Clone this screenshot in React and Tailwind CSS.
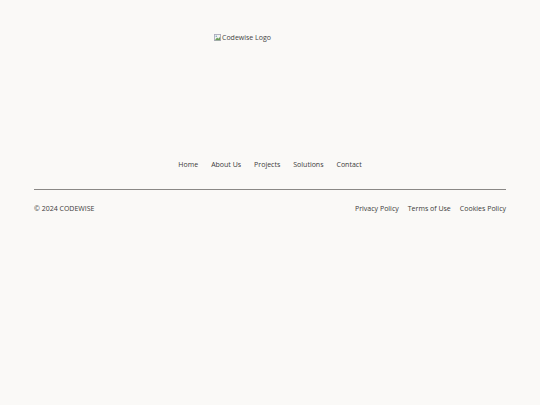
export default function App() {
  const links = ["Home", "About Us", "Projects", "Solutions", "Contact"];
  const legal = ["Privacy Policy", "Terms of Use", "Cookies Policy"];

  return (
    <div className="min-h-screen bg-[#faf9f7] font-['Open_Sans',sans-serif] text-[#3a3a3a]">
      <footer className="px-[34px] pt-[33px]">
        <div className="flex justify-center">
          <div className="h-[127px] w-[112px]">
            <div className="flex items-center gap-[1px] text-[7px] leading-[9px] text-[#444]">
              <svg width="7" height="7" viewBox="0 0 8 8" className="shrink-0">
                <rect x="0.5" y="0.5" width="7" height="7" fill="#f3f3f3" stroke="#aab" strokeWidth="1" />
                <path d="M1 7 L3.5 4 L5 5.5 L7 3 L7 7 Z" fill="#6b9e5a" />
                <circle cx="2.6" cy="2.6" r="0.9" fill="#7ab" />
              </svg>
              <span>Codewise Logo</span>
            </div>
          </div>
        </div>

        <nav className="flex justify-center gap-[13px] text-[7px] leading-[10px]">
          {links.map((link) => (
            <a key={link} href="#">
              {link}
            </a>
          ))}
        </nav>

        <div className="mt-[19px] border-t border-[#8a8886]" />

        <div className="flex items-center justify-between pt-[14px] text-[7px] leading-[10px]">
          <span>© 2024 CODEWISE</span>
          <div className="flex gap-[9px]">
            {legal.map((item) => (
              <a key={item} href="#">
                {item}
              </a>
            ))}
          </div>
        </div>
      </footer>
    </div>
  );
}
